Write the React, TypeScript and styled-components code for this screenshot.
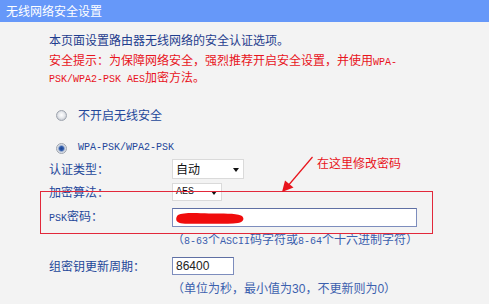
import React from "react";
import styled, { createGlobalStyle } from "styled-components";

const GlobalStyle = createGlobalStyle`
  html, body { margin: 0; padding: 0; background: #f3f3f3; }
  body { font-family: "Noto Sans CJK SC", "Liberation Sans", sans-serif; }
  * { box-sizing: border-box; }
`;

const CJK = `"Noto Sans CJK SC", "Liberation Sans", sans-serif`;

const Page = styled.div`
  position: relative;
  width: 489px;
  height: 304px;
  overflow: hidden;
  background: #f3f3f3;
  font-family: ${CJK};
  font-size: 12px;
`;

const Header = styled.div`
  height: 22px;
  background: #6698f9;
  display: flex;
  align-items: center;
  padding-left: 6px;
`;

const Title = styled.span`
  color: #ffffff;
  font-size: 12px;
  line-height: 14px;
`;

const Content = styled.div`
  padding-left: 49px;
  display: flex;
  flex-direction: column;
`;

const Para = styled.div<{ $mt: number; $color: string }>`
  margin-top: ${(p) => p.$mt}px;
  color: ${(p) => p.$color};
  font-size: 12px;
  line-height: 14px;
  white-space: nowrap;
`;

const Mono = styled.span`
  font-family: "Liberation Mono", monospace;
  font-size: 10px;
`;

const Num = styled.span`
  font-family: "Liberation Sans", sans-serif;
  font-size: 12px;
`;

const RadioRow = styled.div<{ $mt: number }>`
  margin-top: ${(p) => p.$mt}px;
  height: 14px;
  display: flex;
  align-items: center;
  padding-left: 7px;
  gap: 11px;
  color: #24479a;
  line-height: 14px;
`;

const RadioDot = styled.span<{ $checked?: boolean }>`
  width: 11px;
  height: 11px;
  border-radius: 50%;
  border: 1px solid #9ea4ae;
  background: ${(p) =>
    p.$checked
      ? "radial-gradient(circle at 50% 50%, #1f4590 0, #2f5cad 2px, #c9d0dc 3.5px, #eef0f4 5px)"
      : "radial-gradient(circle at 50% 45%, #ffffff 0, #e6e8ec 3px, #c8ccd3 5px)"};
  flex: none;
`;

const FormRow = styled.div<{ $mt: number; $h: number }>`
  margin-top: ${(p) => p.$mt}px;
  height: ${(p) => p.$h}px;
  display: flex;
  align-items: center;
`;

const Label = styled.span`
  width: 123px;
  flex: none;
  color: #24479a;
  font-size: 12px;
  line-height: 14px;
`;

const Select = styled.div<{ $w: number; $h: number }>`
  width: ${(p) => p.$w}px;
  height: ${(p) => p.$h}px;
  background: #ffffff;
  border: 1px solid #dadada;
  display: flex;
  align-items: center;
  justify-content: space-between;
  padding: 0 4px 0 3px;
  color: #111;
  font-size: 12px;
  line-height: 14px;
`;

const Caret = styled.span`
  width: 0;
  height: 0;
  border-left: 3.5px solid transparent;
  border-right: 3.5px solid transparent;
  border-top: 4px solid #111;
  margin-top: 2px;
`;

const TextInput = styled.div<{ $w: number; $h: number }>`
  position: relative;
  width: ${(p) => p.$w}px;
  height: ${(p) => p.$h}px;
  background: #ffffff;
  border: 1px solid #7d8dbd;
  border-top-color: #5f6fa3;
  display: flex;
  align-items: center;
  padding-left: 3px;
  color: #222;
  font-family: "Liberation Sans", sans-serif;
  font-size: 12px;
`;

const Hint = styled.div<{ $mt: number }>`
  margin-top: ${(p) => p.$mt}px;
  margin-left: 123px;
  color: #3b60ae;
  font-size: 12px;
  line-height: 14px;
  white-space: nowrap;
`;

const Blob = styled.svg`
  position: absolute;
  left: 2px;
  top: 2px;
`;

const Callout = styled.div`
  position: absolute;
  left: 40px;
  top: 191px;
  width: 393px;
  height: 43px;
  border: 1px solid #e2283a;
  pointer-events: none;
`;

const ArrowSvg = styled.svg`
  position: absolute;
  left: 0;
  top: 0;
  pointer-events: none;
`;

const CalloutText = styled.span`
  position: absolute;
  left: 317px;
  top: 156px;
  color: #e8141c;
  font-size: 12px;
  line-height: 14px;
  white-space: nowrap;
`;

export default function App() {
  return (
    <>
      <GlobalStyle />
      <Page>
        <Header>
          <Title>无线网络安全设置</Title>
        </Header>
        <Content>
          <Para $mt={11} $color="#1f3d8e">
            本页面设置路由器无线网络的安全认证选项。
          </Para>
          <Para $mt={6} $color="#e8141c">
            安全提示：为保障网络安全，强烈推荐开启安全设置，并使用<Mono>WPA-</Mono>
            <br />
            <Mono>PSK/WPA2-PSK AES</Mono>加密方法。
          </Para>
          <RadioRow $mt={21}>
            <RadioDot />
            <span>不开启无线安全</span>
          </RadioRow>
          <RadioRow $mt={19}>
            <RadioDot $checked />
            <Mono>WPA-PSK/WPA2-PSK</Mono>
          </RadioRow>
          <FormRow $mt={4} $h={20}>
            <Label>认证类型：</Label>
            <Select $w={72} $h={20}>
              <span>自动</span>
              <Caret />
            </Select>
          </FormRow>
          <FormRow $mt={4} $h={18}>
            <Label>加密算法：</Label>
            <Select $w={50} $h={18}>
              <Mono>AES</Mono>
              <Caret />
            </Select>
          </FormRow>
          <FormRow $mt={7} $h={19}>
            <Label>
              <Mono>PSK</Mono>密码：
            </Label>
            <TextInput $w={245} $h={19}>
              <Blob width="70" height="14" viewBox="0 0 70 14">
                <path
                  d="M3 4 C8 1.5 20 2 34 2.5 C48 2.8 60 2 66 4.5 C70 6.5 69 11 63 12 C50 13.5 30 12.5 14 12.8 C6 13 1 11.5 1.2 8 C1.3 6 2 5 3 4 Z"
                  fill="#f00c0c"
                />
              </Blob>
            </TextInput>
          </FormRow>
          <Hint $mt={5}>
            （<Mono>8-63</Mono>个<Mono>ASCII</Mono>码字符或<Mono>8-64</Mono>个十六进制字符）
          </Hint>
          <FormRow $mt={8} $h={18}>
            <Label>组密钥更新周期：</Label>
            <TextInput $w={62} $h={18}>
              86400
            </TextInput>
          </FormRow>
          <Hint $mt={6}>
            （单位为秒，最小值为<Num>30</Num>，不更新则为<Num>0</Num>）
          </Hint>
        </Content>

        <Callout />
        <ArrowSvg width="489" height="304" viewBox="0 0 489 304">
          <line x1="312.5" y1="157" x2="287" y2="187" stroke="#e8141c" strokeWidth="1.2" />
          <polygon points="282,192 285,180.5 293.5,187.5" fill="#e8141c" />
        </ArrowSvg>
        <CalloutText>在这里修改密码</CalloutText>
      </Page>
    </>
  );
}
